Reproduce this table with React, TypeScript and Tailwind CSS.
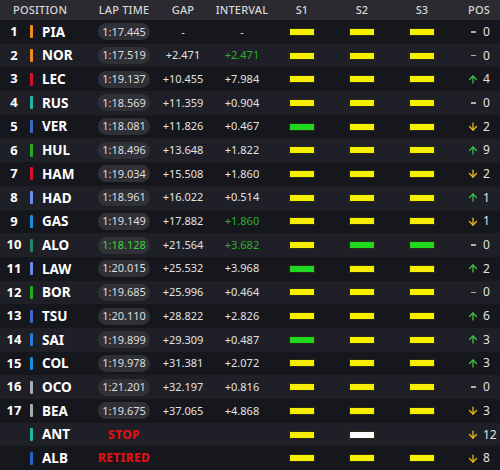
import { ArrowUp, ArrowDown } from 'lucide-react';

type Sector = 'Y' | 'G' | 'W' | null;

interface Row {
    pos: string;
    code: string;
    team: string;
    lap: string;
    lapBest?: boolean;
    status?: string;
    gap: string;
    interval: string;
    intervalGreen?: boolean;
    sectors: Sector[];
    move: 'up' | 'down' | 'none';
    delta: number;
}

const rows: Row[] = [
    { pos: '1', code: 'PIA', team: '#f28a1c', lap: '1:17.445', gap: '-', interval: '-', sectors: ['Y', 'Y', 'Y'], move: 'none', delta: 0 },
    { pos: '2', code: 'NOR', team: '#f28a1c', lap: '1:17.519', gap: '+2.471', interval: '+2.471', intervalGreen: true, sectors: ['Y', 'Y', 'Y'], move: 'none', delta: 0 },
    { pos: '3', code: 'LEC', team: '#d8102e', lap: '1:19.137', gap: '+10.455', interval: '+7.984', sectors: ['Y', 'Y', 'Y'], move: 'up', delta: 4 },
    { pos: '4', code: 'RUS', team: '#1fb8a0', lap: '1:18.569', gap: '+11.359', interval: '+0.904', sectors: ['Y', 'Y', 'Y'], move: 'none', delta: 0 },
    { pos: '5', code: 'VER', team: '#3d69c4', lap: '1:18.081', gap: '+11.826', interval: '+0.467', sectors: ['G', 'Y', 'Y'], move: 'down', delta: 2 },
    { pos: '6', code: 'HUL', team: '#1fae22', lap: '1:18.496', gap: '+13.648', interval: '+1.822', sectors: ['Y', 'Y', 'Y'], move: 'up', delta: 9 },
    { pos: '7', code: 'HAM', team: '#d8102e', lap: '1:19.034', gap: '+15.508', interval: '+1.860', sectors: ['Y', 'Y', 'Y'], move: 'down', delta: 2 },
    { pos: '8', code: 'HAD', team: '#6a8fe8', lap: '1:18.961', gap: '+16.022', interval: '+0.514', sectors: ['Y', 'Y', 'Y'], move: 'up', delta: 1 },
    { pos: '9', code: 'GAS', team: '#1a8fd8', lap: '1:19.149', gap: '+17.882', interval: '+1.860', intervalGreen: true, sectors: ['Y', 'Y', 'Y'], move: 'down', delta: 1 },
    { pos: '10', code: 'ALO', team: '#22866a', lap: '1:18.128', lapBest: true, gap: '+21.564', interval: '+3.682', intervalGreen: true, sectors: ['Y', 'G', 'G'], move: 'none', delta: 0 },
    { pos: '11', code: 'LAW', team: '#6a8fe8', lap: '1:20.015', gap: '+25.532', interval: '+3.968', sectors: ['G', 'Y', 'Y'], move: 'up', delta: 2 },
    { pos: '12', code: 'BOR', team: '#1fae22', lap: '1:19.685', gap: '+25.996', interval: '+0.464', sectors: ['Y', 'Y', 'Y'], move: 'none', delta: 0 },
    { pos: '13', code: 'TSU', team: '#3d69c4', lap: '1:20.110', gap: '+28.822', interval: '+2.826', sectors: ['Y', 'Y', 'Y'], move: 'up', delta: 6 },
    { pos: '14', code: 'SAI', team: '#2a7bd8', lap: '1:19.899', gap: '+29.309', interval: '+0.487', sectors: ['G', 'Y', 'Y'], move: 'up', delta: 3 },
    { pos: '15', code: 'COL', team: '#1a8fd8', lap: '1:19.978', gap: '+31.381', interval: '+2.072', sectors: ['Y', 'Y', 'Y'], move: 'up', delta: 3 },
    { pos: '16', code: 'OCO', team: '#a9acb0', lap: '1:21.201', gap: '+32.197', interval: '+0.816', sectors: ['Y', 'Y', 'Y'], move: 'none', delta: 0 },
    { pos: '17', code: 'BEA', team: '#a9acb0', lap: '1:19.675', gap: '+37.065', interval: '+4.868', sectors: ['Y', 'Y', 'Y'], move: 'down', delta: 3 },
    { pos: '', code: 'ANT', team: '#1fb8a0', lap: '', status: 'STOP', gap: '', interval: '', sectors: ['Y', 'W', null], move: 'down', delta: 12 },
    { pos: '', code: 'ALB', team: '#2566c8', lap: '', status: 'RETIRED', gap: '', interval: '', sectors: ['Y', 'Y', 'Y'], move: 'down', delta: 8 },
];

function SectorBar({ s }: { s: Sector }) {
    if (!s) return null;
    const color = s === 'Y' ? 'bg-[#f6f000]' : s === 'G' ? 'bg-[#1fd81f]' : 'bg-white';
    return <div className={`w-[26px] h-[8px] rounded-[1px] border border-[#2a2a14] ${color}`} />;
}

export default function App() {
    return (
        <div
            className="w-[500px] h-[470px] bg-[#16161d] text-[#e6e6e6] overflow-hidden"
            style={{ fontFamily: '"Noto Sans", "Open Sans", sans-serif' }}
        >
            <div className="flex items-center h-[20px] bg-[#2a2a30] text-[11px] font-medium text-[#d6d6d6] tracking-[0.2px]">
                <div className="w-[94px] pl-[13px]">POSITION</div>
                <div className="w-[60px] text-center">LAP TIME</div>
                <div className="w-[58px] text-center">GAP</div>
                <div className="w-[60px] text-center">INTERVAL</div>
                <div className="w-[60px] text-center">S1</div>
                <div className="w-[60px] text-center">S2</div>
                <div className="w-[60px] text-center">S3</div>
                <div className="flex-1 text-right pr-[10px]">POS</div>
            </div>
            {rows.map((r, i) => (
                <div
                    key={r.code}
                    className={`flex items-center h-[23.7px] ${i % 2 === 0 ? 'bg-[#16161d]' : 'bg-[#1f1f27]'}`}
                >
                    <div className="w-[28px] text-center text-[13px] font-bold text-white">{r.pos}</div>
                    <div className="w-[3px] h-[13px] rounded-[1px] ml-[2px]" style={{ backgroundColor: r.team }} />
                    <div className="w-[61px] pl-[9px] text-[13.5px] font-bold text-white">{r.code}</div>
                    <div className="w-[60px] flex justify-center">
                        {r.status ? (
                            <span className="text-[12px] font-extrabold text-[#e01010] tracking-[0.3px]">{r.status}</span>
                        ) : (
                            <span
                                className={`h-[17px] w-[52px] rounded-full bg-[#303037] flex items-center justify-center text-[11px] ${r.lapBest ? 'text-[#36d636]' : 'text-[#dedede]'}`}
                            >
                                {r.lap}
                            </span>
                        )}
                    </div>
                    <div className="w-[58px] text-center text-[11px] text-[#e2e2e2]">{r.gap}</div>
                    <div className={`w-[60px] text-center text-[11px] ${r.intervalGreen ? 'text-[#2fae2f]' : 'text-[#e2e2e2]'}`}>
                        {r.interval}
                    </div>
                    {r.sectors.map((s, j) => (
                        <div key={j} className="w-[60px] flex justify-center">
                            <SectorBar s={s} />
                        </div>
                    ))}
                    <div className="flex-1 flex items-center pl-[15px]">
                        <div className="w-[12px] flex justify-center">
                            {r.move === 'up' && <ArrowUp size={13} strokeWidth={2.5} className="text-[#3cc84a]" />}
                            {r.move === 'down' && <ArrowDown size={13} strokeWidth={2.5} className="text-[#f2c21a]" />}
                            {r.move === 'none' && <span className="w-[5px] h-[1.5px] bg-[#b0b0b0]" />}
                        </div>
                        <span className="ml-[4px] text-[12px] text-[#e2e2e2]">{r.delta}</span>
                    </div>
                </div>
            ))}
        </div>
    );
}
